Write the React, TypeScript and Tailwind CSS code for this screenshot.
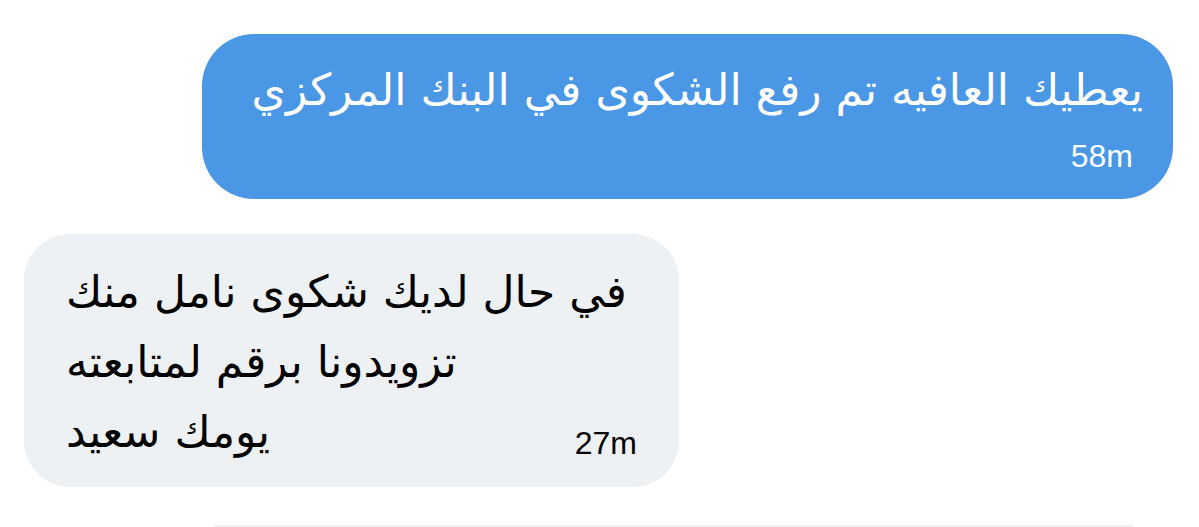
import React from 'react';

type Msg = {
  lines: string[];
  time: string;
};

const sent: Msg = {
  lines: ['يعطيك العافيه تم رفع الشكوى في البنك المركزي'],
  time: '58m',
};

const received: Msg = {
  lines: ['في حال لديك شكوى نامل منك', 'تزويدونا برقم لمتابعته', 'يومك سعيد'],
  time: '27m',
};

const arabic = "font-['DejaVu_Sans',sans-serif]";
const latin = "font-['Liberation_Sans',Arial,sans-serif]";

const SentBubble = ({ msg }: { msg: Msg }) => (
  <div className="ml-auto mr-[26px] mt-[34px] flex h-[165px] w-[971px] flex-col rounded-[52px] bg-[#4a97e6] pl-[36px] pr-[30px] pt-[26px] text-white">
    <p dir="rtl" className={`${arabic} whitespace-nowrap text-[44px] leading-[60px]`}>
      {msg.lines[0]}
    </p>
    <span className={`${latin} mt-[18px] self-end pr-[10px] text-[32px] leading-[36px]`}>{msg.time}</span>
  </div>
);

const ReceivedBubble = ({ msg }: { msg: Msg }) => {
  const last = msg.lines[msg.lines.length - 1];
  return (
    <div className="ml-[24px] mt-[35px] flex h-[253px] w-[655px] flex-col justify-end rounded-[46px] bg-[#eef1f3] pb-[20px] pl-[42px] pr-[42px] text-black">
      {msg.lines.slice(0, -1).map((l) => (
        <p key={l} dir="rtl" className={`${arabic} whitespace-nowrap text-left text-[44px] leading-[70px]`}>
          {l}
        </p>
      ))}
      {/* last line shares its row with the timestamp */}
      <div className="flex items-end justify-between">
        <p dir="rtl" className={`${arabic} whitespace-nowrap text-[44px] leading-[70px]`}>
          {last}
        </p>
        <span className={`${latin} mb-[4px] text-[32px] leading-[40px]`}>{msg.time}</span>
      </div>
    </div>
  );
};

const App: React.FC = () => {
  return (
    <div className="flex h-[527px] w-full flex-col overflow-hidden bg-white">
      <SentBubble msg={sent} />
      <ReceivedBubble msg={received} />
      <div className="mt-auto ml-[215px] mr-[66px] h-[2px] bg-[#eef0f2]" />
    </div>
  );
};

export default App;
